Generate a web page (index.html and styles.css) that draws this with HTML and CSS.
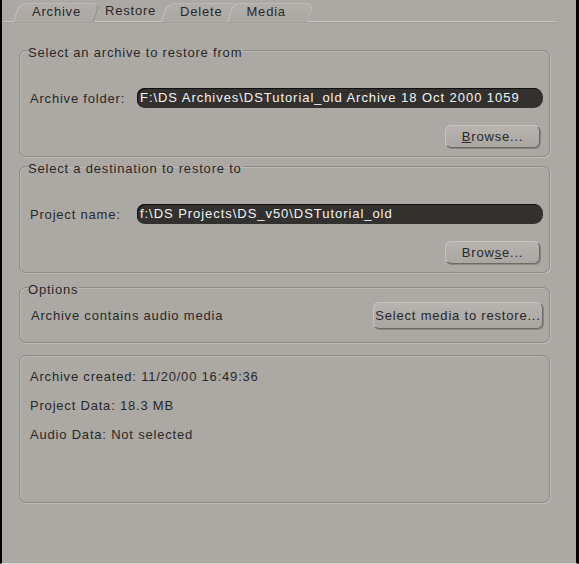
FILE: index.html
```html
<!DOCTYPE html>
<html lang="en">
<head>
  <meta charset="UTF-8">
  <title>Restore</title>
  <link rel="stylesheet" href="styles.css">
</head>
<body>
  <div class="window">
    <div class="tabs">
      <span class="tab">Archive</span>
      <span class="tab active">Restore</span>
      <span class="tab">Delete</span>
      <span class="tab last">Media</span>
    </div>

    <div class="panel">
      <fieldset class="group g-archive">
        <legend>Select an archive to restore from</legend>
        <div class="field-row">
          <span class="label">Archive folder:</span>
          <span class="field">F:\DS Archives\DSTutorial_old Archive 18 Oct 2000 1059</span>
        </div>
        <div class="btn-row">
          <button class="btn browse" type="button"><u>B</u>rowse...</button>
        </div>
      </fieldset>

      <fieldset class="group g-dest">
        <legend>Select a destination to restore to</legend>
        <div class="field-row">
          <span class="label">Project name:</span>
          <span class="field">f:\DS Projects\DS_v50\DSTutorial_old</span>
        </div>
        <div class="btn-row">
          <button class="btn browse" type="button">Brow<u>s</u>e...</button>
        </div>
      </fieldset>

      <fieldset class="group g-options">
        <legend>Options</legend>
        <div class="opt-row">
          <span>Archive contains audio media</span>
          <button class="btn media" type="button">Select media to restore...</button>
        </div>
      </fieldset>

      <fieldset class="group g-info">
        <div class="info">
          <div>Archive created: 11/20/00 16:49:36</div>
          <div>Project Data: 18.3 MB</div>
          <div>Audio Data: Not selected</div>
        </div>
      </fieldset>
    </div>
  </div>
</body>
</html>
```

FILE: styles.css
```css
html, body {
  margin: 0;
  padding: 0;
  background: #aca8a4;
}
body {
  font-family: "Liberation Sans", Arial, sans-serif;
  font-size: 13px;
  letter-spacing: 0.8px;
  color: #282828;
}
.window {
  width: 579px;
  height: 564px;
  box-sizing: border-box;
  border-left: 2px solid #000;
  border-right: 3px solid #000;
  border-bottom: 1px solid #d8d4d0;
  background: #aca8a4;
  overflow: hidden;
}

/* tab strip */
.tabs {
  position: relative;
  z-index: 0;
  display: flex;
  height: 21px;
  padding-left: 18px;
  margin-right: 20px;
  border-bottom: 1px solid #c8c4c0;
  box-shadow: 0 1px 0 #a29e9a;
}
.tab {
  position: relative;
  padding: 0 12px;
  line-height: 24px;
  color: #282828;
}
.tab::before {
  content: "";
  position: absolute;
  left: -4px;
  right: -4px;
  top: 3px;
  bottom: -1px;
  border-top: 1px solid #bdb9b5;
  border-left: 1px solid #cdc9c5;
  border-right: 1px solid #8e8a86;
  border-radius: 7px 7px 0 0;
  transform: skewX(-18deg);
  background: linear-gradient(#b1ada9, #aca8a4);
  z-index: -1;
}
.tab.active::before {
  display: none;
}
.tab.active {
  line-height: 22px;
}
.tab.last::before {
  border-right-color: #bab6b2;
  right: -14px;
}

/* panel */
.panel {
  display: flex;
  flex-direction: column;
  padding: 19px 26px 0 17px;
}
.group {
  margin: 0;
  padding: 0 6px 0 10px;
  border: 1px solid #8d8985;
  border-radius: 7px;
  box-shadow: 1px 1px 0 #c2beba, inset 1px 1px 0 #bcb8b4;
  min-width: 0;
  box-sizing: border-box;
}
.group legend {
  padding: 4px 1px 0 0;
  margin-left: -2px;
  line-height: 15px;
}
.g-archive, .g-dest {
  height: 116px;
}
.g-options {
  height: 65px;
  margin-top: 5px;
}
.g-info {
  height: 148px;
  margin-top: 12px;
  padding-top: 13px;
}

.field-row {
  display: flex;
  align-items: center;
  margin-top: 28px;
}
.label {
  width: 107px;
  flex: none;
}
.field {
  flex: 1;
  height: 20px;
  line-height: 20px;
  padding-left: 3px;
  background: #333130;
  color: #f4f4f4;
  letter-spacing: 0.95px;
  border-radius: 8px 9px 9px 8px;
  white-space: nowrap;
  overflow: hidden;
  box-shadow: inset 1px 1px 0 #111;
}
.btn-row {
  display: flex;
  justify-content: flex-end;
  margin-top: 17px;
  padding-right: 3px;
}
.btn {
  font-family: inherit;
  font-size: 13px;
  letter-spacing: 0.8px;
  color: #282828;
  background: linear-gradient(#b7b3af, #aaa6a2);
  border: 1px solid #c9c5c1;
  border-right-color: #6e6a66;
  border-bottom-color: #6e6a66;
  border-radius: 6px;
  box-shadow: 1px 1px 0 #8a8682;
  padding: 0;
  cursor: pointer;
}
.browse {
  width: 95px;
  height: 23px;
}
.opt-row {
  display: flex;
  align-items: center;
  justify-content: space-between;
  padding-top: 5px;
  padding-left: 1px;
}
.media {
  width: 170px;
  height: 27px;
}
.info {
  display: flex;
  flex-direction: column;
  gap: 14px;
  line-height: 15px;
}
```
